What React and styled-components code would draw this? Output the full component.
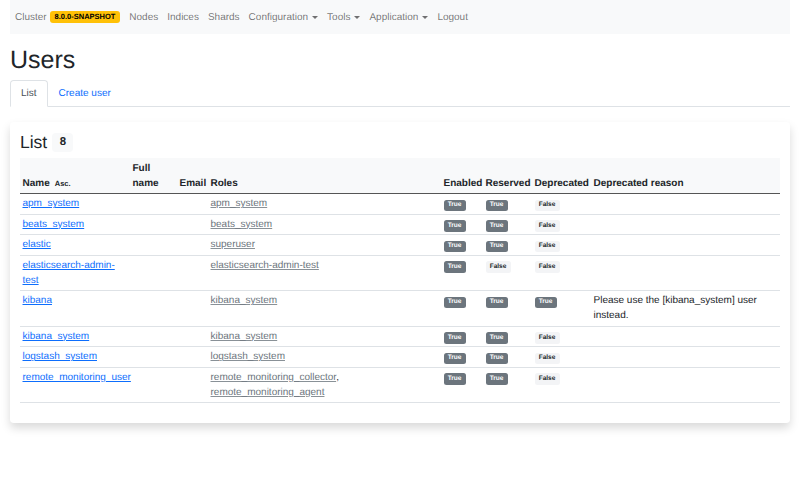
import React from "react";
import styled, { createGlobalStyle } from "styled-components";

const Global = createGlobalStyle`
  html, body { margin: 0; padding: 0; background: #fff; }
  body {
    font-family: "Liberation Sans", Arial, sans-serif;
    font-size: 10px;
    line-height: 1.5;
    color: #212529;
    text-rendering: geometricPrecision;
  }
  * { box-sizing: border-box; }
`;

const Page = styled.div`
  padding: 0 10px 30px;
`;

const Navbar = styled.nav`
  display: flex;
  align-items: center;
  background: #f8f9fa;
  padding: 5px 0;
`;

const NavLink = styled.a`
  display: flex;
  align-items: center;
  padding: 4.5px 4.5px;
  color: rgba(0, 0, 0, 0.55);
  text-decoration: none;
  line-height: 15px;
  white-space: nowrap;
  &:first-child {
    padding-left: 5px;
  }
  &::after {
    content: ${(p) => (p.$dropdown ? "''" : "none")};
    display: inline-block;
    margin-left: 4px;
    border-top: 3px solid;
    border-left: 3px solid transparent;
    border-right: 3px solid transparent;
    margin-top: 1px;
  }
`;

const VersionBadge = styled.span`
  display: inline-block;
  margin-left: 3px;
  background: #ffc107;
  color: #000;
  font-weight: 700;
  font-size: 7.5px;
  line-height: 1;
  padding: 2.6px 4.9px;
  border-radius: 3px;
`;

const Title = styled.h1`
  font-size: 25px;
  font-weight: 500;
  line-height: 1.2;
  margin: 11px 0 5px;
`;

const Tabs = styled.ul`
  display: flex;
  list-style: none;
  margin: 0;
  padding: 0;
  border-bottom: 1px solid #dee2e6;
`;

const Tab = styled.li`
  margin-bottom: -1px;
`;

const TabLink = styled.a`
  display: block;
  padding: 5px 10px;
  line-height: 15px;
  border: 1px solid transparent;
  border-radius: 3.75px 3.75px 0 0;
  text-decoration: none;
  color: ${(p) => (p.$active ? "#495057" : "#0d6efd")};
  background: ${(p) => (p.$active ? "#fff" : "transparent")};
  border-color: ${(p) => (p.$active ? "#dee2e6 #dee2e6 #fff" : "transparent")};
`;

const Card = styled.div`
  margin-top: 15px;
  background: #fff;
  border-radius: 3.75px;
  box-shadow: 0 5px 10px rgba(0, 0, 0, 0.15);
`;

const CardBody = styled.div`
  padding: 10px;
`;

const CardTitle = styled.h3`
  font-size: 17.5px;
  font-weight: 500;
  line-height: 1.2;
  margin: 0 0 5px;
  display: flex;
  align-items: center;
  gap: 5px;
`;

const CountBadge = styled.span`
  display: inline-block;
  background: #f8f9fa;
  color: #212529;
  font-weight: 700;
  font-size: 11.4px;
  line-height: 1;
  padding: 4px 7.4px;
  border-radius: 3.75px;
`;

const Table = styled.table`
  width: 100%;
  border-collapse: collapse;
  table-layout: fixed;
  margin-bottom: 10px;
`;

const Th = styled.th`
  text-align: left;
  vertical-align: bottom;
  font-weight: 700;
  padding: 2.5px;
  background: #f8f9fa;
  border-bottom: 1px solid #555;
`;

const Td = styled.td`
  vertical-align: top;
  padding: 2.25px 2.5px;
  border-bottom: 1px solid #dee2e6;
`;

const SortHint = styled.span`
  font-size: 7.5px;
  font-weight: 700;
  margin-left: 5px;
`;

const NameLink = styled.a`
  color: #0d6efd;
  text-decoration: underline;
`;

const RoleLink = styled.a`
  color: #6c757d;
  text-decoration: underline;
  text-decoration-color: rgba(108, 117, 125, 0.8);
`;

const Flag = styled.span`
  display: inline-block;
  font-size: 6.5px;
  font-weight: 700;
  line-height: 1;
  padding: 2.3px 4.2px;
  border-radius: 2.5px;
  background: ${(p) => (p.$on ? "#6c757d" : "#f3f4f6")};
  color: ${(p) => (p.$on ? "#fff" : "#212529")};
`;

const users = [
  { name: "apm_system", roles: ["apm_system"], enabled: true, reserved: true, deprecated: false },
  { name: "beats_system", roles: ["beats_system"], enabled: true, reserved: true, deprecated: false },
  { name: "elastic", roles: ["superuser"], enabled: true, reserved: true, deprecated: false },
  { name: "elasticsearch-admin-test", roles: ["elasticsearch-admin-test"], enabled: true, reserved: false, deprecated: false },
  { name: "kibana", roles: ["kibana_system"], enabled: true, reserved: true, deprecated: true, reason: "Please use the [kibana_system] user instead." },
  { name: "kibana_system", roles: ["kibana_system"], enabled: true, reserved: true, deprecated: false },
  { name: "logstash_system", roles: ["logstash_system"], enabled: true, reserved: true, deprecated: false },
  { name: "remote_monitoring_user", roles: ["remote_monitoring_collector", "remote_monitoring_agent"], enabled: true, reserved: true, deprecated: false },
];

const widths = [110, 47, 31, 233, 42, 49, 59, 189];

const Bool = ({ v }) => <Flag $on={v}>{v ? "True" : "False"}</Flag>;

export default function App() {
  return (
    <>
      <Global />
      <Page>
        <Navbar>
          <NavLink href="#">
            Cluster <VersionBadge>8.0.0-SNAPSHOT</VersionBadge>
          </NavLink>
          <NavLink href="#">Nodes</NavLink>
          <NavLink href="#">Indices</NavLink>
          <NavLink href="#">Shards</NavLink>
          <NavLink href="#" $dropdown>Configuration</NavLink>
          <NavLink href="#" $dropdown>Tools</NavLink>
          <NavLink href="#" $dropdown>Application</NavLink>
          <NavLink href="#">Logout</NavLink>
        </Navbar>
        <Title>Users</Title>
        <Tabs>
          <Tab>
            <TabLink href="#" $active>List</TabLink>
          </Tab>
          <Tab>
            <TabLink href="#">Create user</TabLink>
          </Tab>
        </Tabs>
        <Card>
          <CardBody>
            <CardTitle>
              List <CountBadge>8</CountBadge>
            </CardTitle>
            <Table>
              <colgroup>
                {widths.map((w, i) => (
                  <col key={i} style={{ width: w }} />
                ))}
              </colgroup>
              <thead>
                <tr>
                  <Th>
                    Name<SortHint>Asc.</SortHint>
                  </Th>
                  <Th>Full name</Th>
                  <Th>Email</Th>
                  <Th>Roles</Th>
                  <Th>Enabled</Th>
                  <Th>Reserved</Th>
                  <Th>Deprecated</Th>
                  <Th>Deprecated reason</Th>
                </tr>
              </thead>
              <tbody>
                {users.map((u) => (
                  <tr key={u.name}>
                    <Td>
                      <NameLink href="#">{u.name}</NameLink>
                    </Td>
                    <Td />
                    <Td />
                    <Td>
                      {u.roles.map((r, i) => (
                        <React.Fragment key={r}>
                          {i > 0 && ", "}
                          <RoleLink href="#">{r}</RoleLink>
                        </React.Fragment>
                      ))}
                    </Td>
                    <Td>
                      <Bool v={u.enabled} />
                    </Td>
                    <Td>
                      <Bool v={u.reserved} />
                    </Td>
                    <Td>
                      <Bool v={u.deprecated} />
                    </Td>
                    <Td>{u.reason || ""}</Td>
                  </tr>
                ))}
              </tbody>
            </Table>
          </CardBody>
        </Card>
      </Page>
    </>
  );
}
